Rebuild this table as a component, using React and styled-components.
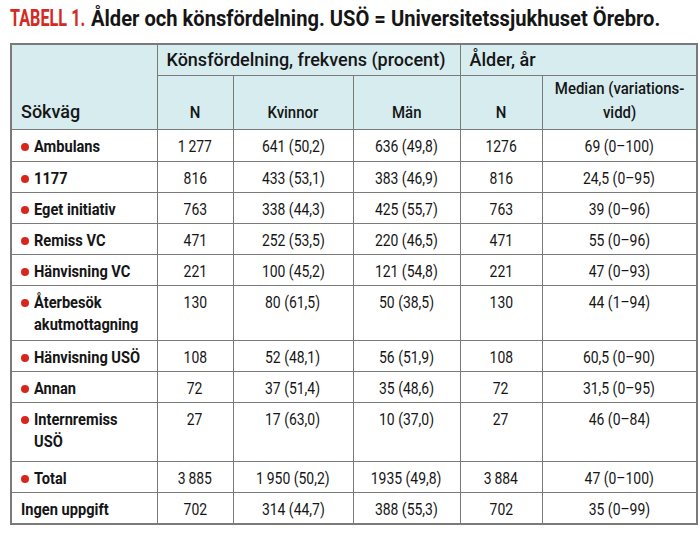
import styled, { createGlobalStyle } from 'styled-components'

const Global = createGlobalStyle`
    body {
        margin : 0;
        background : #ffffff;
        font-family : Roboto, "Liberation Sans", sans-serif;
        color : #151515;
    }
`
const Page = styled.div`
    width : 700px;
    height : 534px;
    padding : 5px 0px 0px 10px;
    box-sizing : border-box;
`
const Title = styled.h1`
    margin : 0px 0px 10px 0px;
    height : 28px;
    font-size : 22px;
    line-height : 28px;
    font-weight : 700;
    white-space : nowrap;
    display : flex;
    align-items : baseline;
`
const Label = styled.span`
    display : inline-block;
    font-weight : 700;
    font-size : 23px;
    color : #d42a20;
    transform : scaleX(0.705);
    transform-origin : left;
    margin-right : -26px;
`
// the print font is a condensed grotesque; squeeze Roboto to match
const Cond = styled.span`
    display : inline-block;
    white-space : nowrap;
    transform : scaleX(${props => props.$s || 0.82});
    transform-origin : ${props => props.$origin || 'center'};
`
const Table = styled.table`
    width : 686px;
    table-layout : fixed;
    border-collapse : collapse;
    border : 2px solid #7a7a7a;
    font-size : 17px;
`
const Head = styled.th`
    background : #d6ecee;
    border : 1px solid #7a7a7a;
    font-weight : 500;
    line-height : 24px;
    padding : 0px 2px;
    font-size : ${props => props.$big ? '18px' : '17px'};
    text-align : ${props => props.$left ? 'left' : 'center'};
    padding-left : ${props => props.$left ? '9px' : '2px'};
    vertical-align : ${props => props.$bottom ? 'bottom' : 'middle'};
    padding-bottom : ${props => props.$bottom ? '5px' : '0px'};
`
const Row = styled.tr`
    height : ${props => props.$h || 31}px;
`
const Cell = styled.td`
    border : 1px solid #7a7a7a;
    padding : 5px 4px 3px 4px;
    line-height : 22px;
    vertical-align : top;
    text-align : center;
    font-weight : 400;
`
const NameCell = styled(Cell)`
    text-align : left;
    font-weight : 700;
    padding-left : 9px;
`
const Name = styled.div`
    display : flex;
    align-items : flex-start;
`
const Dot = styled.span`
    flex : none;
    width : 8px;
    height : 8px;
    border-radius : 50%;
    background : #d8261c;
    margin : 8px 5px 0px 0px;
`

const rows = [
    ['Ambulans', '1\u2009277', '641 (50,2)', '636 (49,8)', '1276', '69 (0–100)', 32],
    ['1177', '816', '433 (53,1)', '383 (46,9)', '816', '24,5 (0–95)'],
    ['Eget initiativ', '763', '338 (44,3)', '425 (55,7)', '763', '39 (0–96)'],
    ['Remiss VC', '471', '252 (53,5)', '220 (46,5)', '471', '55 (0–96)'],
    ['Hänvisning VC', '221', '100 (45,2)', '121 (54,8)', '221', '47 (0–93)'],
    [['Återbesök', 'akutmottagning'], '130', '80 (61,5)', '50 (38,5)', '130', '44 (1–94)', 55],
    ['Hänvisning USÖ', '108', '52 (48,1)', '56 (51,9)', '108', '60,5 (0–90)'],
    ['Annan', '72', '37 (51,4)', '35 (48,6)', '72', '31,5 (0–95)'],
    [['Internremiss', 'USÖ'], '27', '17 (63,0)', '10 (37,0)', '27', '46 (0–84)', 59],
    ['Total', '3\u2009885', '1\u2009950 (50,2)', '1935 (49,8)', '3\u2009884', '47 (0–100)'],
    ['Ingen uppgift', '702', '314 (44,7)', '388 (55,3)', '702', '35 (0–99)', 31, true],
]

const App = () => {
    return (
        <Page>
            <Global />
            <Title>
                <Label>TABELL 1.</Label>
                <Cond $s={0.915} $origin='left'>Ålder och könsfördelning. USÖ = Universitetssjukhuset Örebro.</Cond>
            </Title>
            <Table>
                <colgroup>
                    <col style={{width : 146}} />
                    <col style={{width : 76}} />
                    <col style={{width : 120}} />
                    <col style={{width : 107}} />
                    <col style={{width : 82}} />
                    <col style={{width : 155}} />
                </colgroup>
                <thead>
                    <tr style={{height : 31}}>
                        <Head rowSpan={2} $left $bottom $big>Sökväg</Head>
                        <Head colSpan={3} $left $big>Könsfördelning, frekvens (procent)</Head>
                        <Head colSpan={2} $left $big>Ålder, år</Head>
                    </tr>
                    <tr style={{height : 53}}>
                        <Head $bottom><Cond $s={0.88}>N</Cond></Head>
                        <Head $bottom><Cond $s={0.88}>Kvinnor</Cond></Head>
                        <Head $bottom><Cond $s={0.88}>Män</Cond></Head>
                        <Head $bottom><Cond $s={0.88}>N</Cond></Head>
                        <Head $bottom><Cond $s={0.88}>Median (variations-<br />vidd)</Cond></Head>
                    </tr>
                </thead>
                <tbody>
                    {rows.map(([name, a, b, c, d, e, h, noDot], i) => {
                        const lines = Array.isArray(name) ? name : [name]
                        return (
                            <Row key={i} $h={h}>
                                <NameCell>
                                    <Name>
                                        {!noDot && <Dot />}
                                        <Cond $s={0.86} $origin='left'>
                                            {lines.map((l, j) => <div key={j}>{l}</div>)}
                                        </Cond>
                                    </Name>
                                </NameCell>
                                {[a, b, c, d, e].map((v, j) => <Cell key={j}><Cond>{v}</Cond></Cell>)}
                            </Row>
                        )
                    })}
                </tbody>
            </Table>
        </Page>
    )
}

export default App
